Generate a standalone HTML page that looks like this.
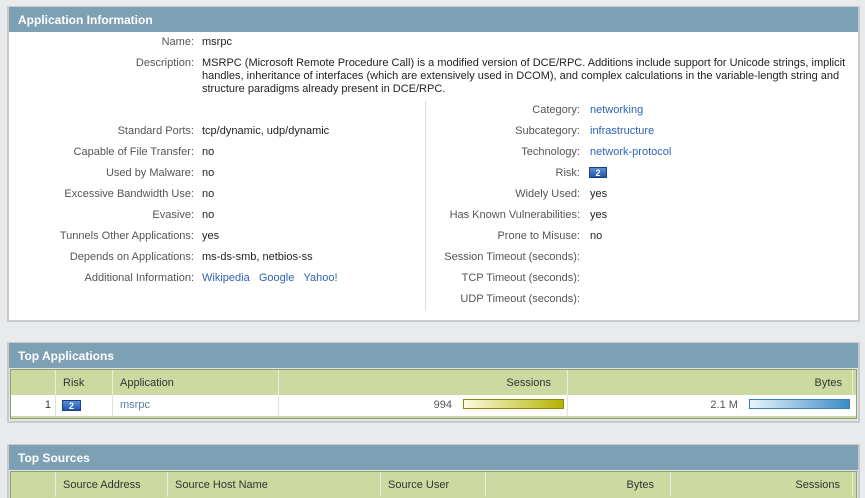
<!DOCTYPE html>
<html style="overflow:hidden;height:498px"><head><meta charset="utf-8"><style>
*{margin:0;padding:0;box-sizing:border-box}
body{width:865px;height:498px;overflow:hidden;background:#e9eaeb;font-family:"Liberation Sans",Tahoma,sans-serif;font-size:11px;color:#222;position:relative}
.p{position:absolute;background:#fff;border:2px solid #c9cacb;border-top:1px solid #c9cacb}
.h{position:absolute;left:0;right:0;top:0;height:25px;background:#7ea0b5;color:#fff;font-weight:bold;padding:6px 0 0 9px;font-size:12px}
.t{position:absolute;white-space:nowrap}
.l{color:#555;text-align:right;width:185px}
.r{color:#555;text-align:right;width:180px}
a{color:#2f63b5;text-decoration:none}
.risk{display:inline-block;width:18px;height:11px;background:linear-gradient(#5a8fd8,#2056b0);color:#fff;font-weight:bold;font-size:9px;text-align:center;line-height:11px;border:1px solid #1a3f80}
.tb{position:absolute;left:1px;right:1px;border:1px solid #8aa070}
.th{position:absolute;top:0;height:25px;background:#ccd9a1;border-right:1px solid #e8eed5;padding-top:7px;color:#333}
.td{position:absolute;height:21px;padding-top:4px;border-right:1px solid #dfe6c8;color:#555}
</style></head><body>

<div class="p" style="left:7px;top:6px;width:853px;height:316px">
<div class="h">Application Information</div>
<div style="position:absolute;left:416px;top:94px;width:1px;height:210px;background:#ddd"></div>
<div class="t l" style="left:0;top:29px">Name:</div><div class="t" style="left:193px;top:29px">msrpc</div>
<div class="t l" style="left:0;top:50px">Description:</div>
<div class="t" style="left:193px;top:50px;white-space:normal;width:650px;line-height:13px">MSRPC (Microsoft Remote Procedure Call) is a modified version of DCE/RPC. Additions include support for Unicode strings, implicit handles, inheritance of interfaces (which are extensively used in DCOM), and complex calculations in the variable-length string and structure paradigms already present in DCE/RPC.</div>

<div class="t l" style="left:0;top:118px">Standard Ports:</div><div class="t" style="left:193px;top:118px">tcp/dynamic, udp/dynamic</div>
<div class="t l" style="left:0;top:139px">Capable of File Transfer:</div><div class="t" style="left:193px;top:139px">no</div>
<div class="t l" style="left:0;top:160px">Used by Malware:</div><div class="t" style="left:193px;top:160px">no</div>
<div class="t l" style="left:0;top:181px">Excessive Bandwidth Use:</div><div class="t" style="left:193px;top:181px">no</div>
<div class="t l" style="left:0;top:202px">Evasive:</div><div class="t" style="left:193px;top:202px">no</div>
<div class="t l" style="left:0;top:223px">Tunnels Other Applications:</div><div class="t" style="left:193px;top:223px">yes</div>
<div class="t l" style="left:0;top:244px">Depends on Applications:</div><div class="t" style="left:193px;top:244px">ms-ds-smb, netbios-ss</div>
<div class="t l" style="left:0;top:265px">Additional Information:</div><div class="t" style="left:193px;top:265px"><a>Wikipedia</a>&nbsp;&nbsp;&nbsp;<a>Google</a>&nbsp;&nbsp;&nbsp;<a>Yahoo!</a></div>

<div class="t r" style="left:391px;top:97px">Category:</div><div class="t" style="left:581px;top:97px"><a>networking</a></div>
<div class="t r" style="left:391px;top:118px">Subcategory:</div><div class="t" style="left:581px;top:118px"><a>infrastructure</a></div>
<div class="t r" style="left:391px;top:139px">Technology:</div><div class="t" style="left:581px;top:139px"><a>network-protocol</a></div>
<div class="t r" style="left:391px;top:160px">Risk:</div><div class="t" style="left:580px;top:160px"><span class="risk">2</span></div>
<div class="t r" style="left:391px;top:181px">Widely Used:</div><div class="t" style="left:581px;top:181px">yes</div>
<div class="t r" style="left:391px;top:202px">Has Known Vulnerabilities:</div><div class="t" style="left:581px;top:202px">yes</div>
<div class="t r" style="left:391px;top:223px">Prone to Misuse:</div><div class="t" style="left:581px;top:223px">no</div>
<div class="t r" style="left:391px;top:244px">Session Timeout (seconds):</div>
<div class="t r" style="left:391px;top:265px">TCP Timeout (seconds):</div>
<div class="t r" style="left:391px;top:286px">UDP Timeout (seconds):</div>
</div>

<div class="p" style="left:7px;top:342px;width:853px;height:81px;background:#e2e5e8">
<div class="h">Top Applications</div>
<div class="tb" style="top:26px;height:50px;background:#ccd9a1">
<div class="th" style="left:0;width:45px"></div>
<div class="th" style="left:45px;width:57px;padding-left:7px">Risk</div>
<div class="th" style="left:102px;width:166px;padding-left:7px">Application</div>
<div class="th" style="left:268px;width:289px;text-align:right;padding-right:16px">Sessions</div>
<div class="th" style="left:557px;width:285px;text-align:right;padding-right:10px">Bytes</div>
<div style="position:absolute;left:0;right:0;top:25px;height:21px;background:#fff"></div>
<div class="td" style="left:0;top:25px;width:45px;text-align:right;padding-right:4px;color:#333">1</div>
<div class="td" style="left:45px;top:25px;width:57px;padding-left:6px;padding-top:5px"><span class="risk" style="width:19px">2</span></div>
<div class="td" style="left:102px;top:25px;width:166px;padding-left:7px"><a style="color:#5580aa">msrpc</a></div>
<div class="td" style="left:268px;top:25px;width:289px;text-align:right;padding-right:3px">994 <span style="display:inline-block;vertical-align:-1px;width:101px;height:10px;margin-left:8px;border:1px solid #8a8a10;background:linear-gradient(90deg,#fbfbe0,#b5b300)"></span></div>
<div class="td" style="left:557px;top:25px;width:285px;text-align:right;padding-right:3px;border:none">2.1 M <span style="display:inline-block;vertical-align:-1px;width:101px;height:10px;margin-left:8px;border:1px solid #3a7fb5;background:linear-gradient(90deg,#e8f4fb,#3d8bc6)"></span></div>
</div>
</div>

<div class="p" style="left:7px;top:444px;width:853px;height:60px;background:#e2e5e8">
<div class="h">Top Sources</div>
<div class="tb" style="top:26px;height:40px;background:#ccd9a1">
<div class="th" style="left:0;width:45px"></div>
<div class="th" style="left:45px;width:112px;padding-left:7px">Source Address</div>
<div class="th" style="left:157px;width:213px;padding-left:7px">Source Host Name</div>
<div class="th" style="left:370px;width:105px;padding-left:7px">Source User</div>
<div class="th" style="left:475px;width:185px;text-align:right;padding-right:16px">Bytes</div>
<div class="th" style="left:660px;width:182px;text-align:right;padding-right:12px">Sessions</div>
</div>
</div>
</body></html>
